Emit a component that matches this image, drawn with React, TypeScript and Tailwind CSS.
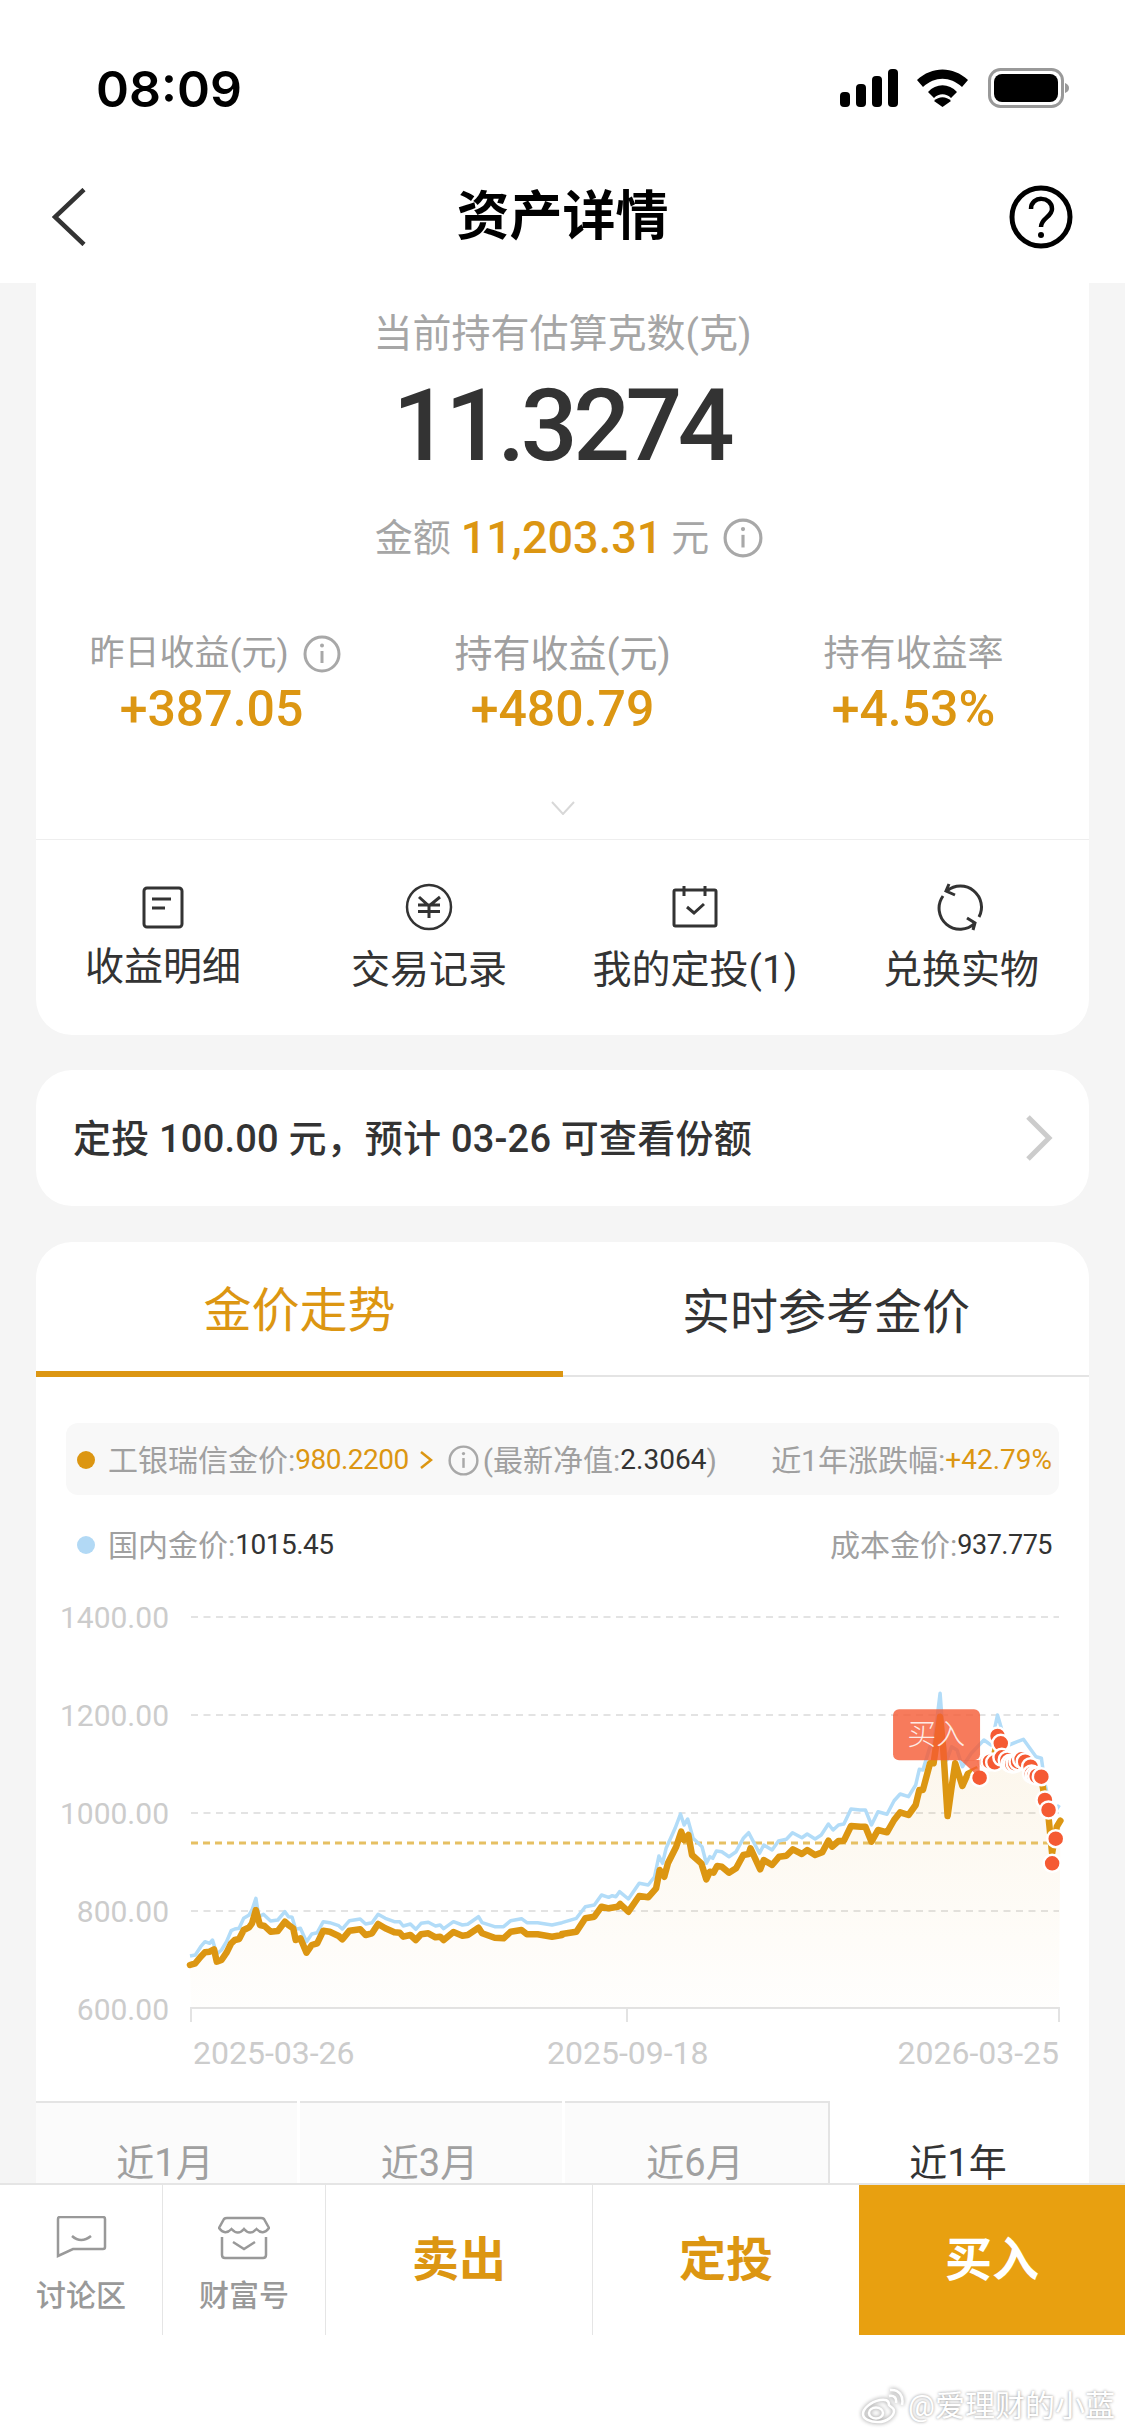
const goldLeft = [530,1155,545,1150,560,1130,572,1117,585,1115,597,1108,605,1145,618,1140,632,1118,645,1090,655,1080,667,1077,680,1050,695,1042,703,1030,714,990,725,1035,738,1038,755,1055,775,1053,795,1025,805,1035,818,1045,825,1080,838,1075,855,1118,870,1095,885,1090,902,1052,920,1055,945,1068,955,1078,975,1052,1005,1048,1020,1065,1038,1060,1055,1032,1075,1045,1100,1057,1115,1058,1125,1070,1145,1065,1160,1080,1175,1063,1195,1060,1215,1072,1228,1070,1238,1080,1265,1056,1290,1067,1305,1065,1335,1043,1345,1060,1380,1073,1405,1075,1425,1055,1455,1050,1470,1063,1500,1063,1540,1070,1568,1065];
const blueLeft = [530,1128,545,1125,560,1100,572,1085,585,1090,593,1080,605,1122,618,1110,632,1085,645,1052,655,1047,667,1045,680,1015,695,1005,703,990,714,955,722,1010,735,1003,755,1023,775,1020,795,995,805,1010,815,1012,825,1048,838,1045,855,1085,870,1062,885,1058,902,1025,920,1028,945,1037,955,1047,975,1022,1005,1017,1020,1032,1038,1028,1055,1003,1075,1015,1100,1025,1115,1025,1125,1038,1145,1032,1160,1048,1175,1030,1195,1027,1215,1038,1228,1035,1238,1046,1265,1025,1290,1035,1305,1033,1335,1010,1345,1028,1380,1040,1405,1040,1425,1022,1455,1016,1470,1028,1500,1028,1540,1035,1568,1028];
const goldRight = [0,852,40,845,65,805,90,800,110,770,130,775,155,770,162,762,185,785,215,738,240,742,262,715,272,660,285,680,295,640,318,590,332,545,340,570,352,555,362,615,388,640,402,688,412,665,422,668,432,648,445,650,465,668,485,655,505,615,520,612,525,595,552,658,562,630,585,645,605,620,625,617,643,598,668,612,683,600,705,615,725,607,742,572,752,590,770,573,785,572,805,528,832,530,845,530,862,575,880,540,905,547,925,510,942,487,965,495,985,465,995,420,1005,420,1025,340,1035,340,1053,200,1062,300,1074,498,1084,420,1095,340,1115,408,1130,372,1163,355,1200,330,1215,265,1225,285,1245,330,1290,335,1335,385,1345,450,1355,500,1365,610,1378,530,1388,512];
const blueRight = [0,818,40,805,65,770,90,765,110,735,130,742,140,737,150,740,160,725,185,747,215,700,240,705,258,680,270,618,280,640,290,595,315,535,330,492,340,525,350,507,365,565,390,590,402,640,412,620,420,625,430,603,445,605,465,620,485,605,505,565,520,548,550,610,562,585,585,600,603,573,625,568,642,548,668,563,683,552,705,567,722,555,742,522,755,540,770,525,785,522,805,477,830,480,845,480,862,525,880,485,905,493,925,452,942,432,965,440,985,405,995,358,1005,360,1025,290,1035,290,1053,130,1062,260,1072,330,1085,290,1100,300,1115,350,1140,310,1175,270,1195,285,1213,195,1225,240,1245,285,1285,268,1320,320,1335,325,1345,400,1365,500,1385,465];
const buyDots = [[1178,335],[1185,335],[1192,335],[1205,337],[1213,258],[1222,280],[1225,322],[1240,330],[1248,340],[1254,342],[1262,340],[1270,335],[1280,328],[1290,335],[1305,350],[1308,372],[1315,376],[1322,378],[1335,380],[1345,450],[1355,480],[1375,566],[1365,640],[1163,383]];

function toPoints(left: number[], right: number[]) {
  const out: string[] = [];
  for (let i = 0; i < left.length; i += 2) out.push(`${(left[i] / 2.79).toFixed(1)},${(1580 + left[i + 1] / 3).toFixed(1)}`);
  for (let i = 0; i < right.length; i += 2) out.push(`${(562 + right[i] / 2.785).toFixed(1)},${(1650 + right[i + 1] / 3).toFixed(1)}`);
  return out.join(' ');
}

function InfoIcon({ size }: { size: string }) {
  return (
    <svg viewBox="0 0 38 38" className={`${size} shrink-0`} fill="none" stroke="#a8a8a8">
      <circle cx="19" cy="19" r="17" strokeWidth="3" />
      <path d="M19 16v12" strokeWidth="3" />
      <circle cx="19" cy="10.5" r="2" fill="#a8a8a8" stroke="none" />
    </svg>
  );
}

function StatusBar() {
  return (
    <div className="flex h-[60px] items-center justify-between pl-[96px] pr-[56px]">
      <span className="pt-[2px] font-['Inter'] text-[50px] font-semibold text-black">08:09</span>
      <svg viewBox="0 0 229 40" className="h-[40px] w-[229px]" fill="black">
        <rect x="0" y="24" width="10" height="15" rx="4" />
        <rect x="16" y="16" width="10" height="23" rx="4" />
        <rect x="32" y="8" width="10" height="31" rx="4" />
        <rect x="48" y="1" width="10" height="38" rx="4" />
        <path d="M77 12C92 -2 113 -2 128 12L122 19C110 8 95 8 83 19Z" />
        <path d="M88 24C96 15 109 15 117 24L111 30C106 25 99 25 94 30Z" />
        <path d="M102.500 39L94 33C99 28 106 28 111 33Z" />
        <rect x="149.500" y="1.500" width="73" height="37" rx="11" fill="none" stroke="#999" strokeWidth="3" />
        <rect x="154" y="6" width="64" height="28" rx="8" />
        <path d="M225 15C228 16 229 18 229 20C229 22 228 24 225 25Z" fill="#999" />
      </svg>
    </div>
  );
}

function NavBar() {
  return (
    <div className="mt-[67px] grid h-[62px] grid-cols-[1fr_auto_1fr] items-center px-[52px]">
      <svg viewBox="0 0 34 58" className="h-[58px] w-[34px]" fill="none" stroke="#333" strokeWidth="4.5">
        <path d="M32 1.500L3 29L32 56.500" />
      </svg>
      <h1 className="text-[53px] font-bold leading-none text-black">资产详情</h1>
      <svg viewBox="0 0 64 64" className="h-[64px] w-[64px] justify-self-end" fill="none" stroke="black">
        <circle cx="32" cy="32" r="29" strokeWidth="5" />
        <path d="M22 24C22 10 43 11 43 24C43 32 32 33 32 42" strokeWidth="4.500" />
        <circle cx="32" cy="50" r="3" fill="black" stroke="none" />
      </svg>
    </div>
  );
}

function Stat({ label, value, info, labelCls }: { label: string; value: string; info?: boolean; labelCls: string }) {
  return (
    <div className="flex flex-col items-center">
      <div className={`${labelCls} flex h-[50px] items-center gap-[14px] text-[#a0a0a0]`}>
        {label}
        {info && <InfoIcon size="h-[38px] w-[38px]" />}
      </div>
      <div className="flex h-[60px] items-center text-[50px] font-medium text-[#dc9612]">{value}</div>
    </div>
  );
}

const actions = [
  {
    label: '收益明细',
    labelCls: 'mt-[11px]',
    icon: (
      <svg viewBox="0 0 48 48" className="h-[48px] w-[48px]" fill="none" stroke="#333" strokeWidth="3">
        <rect x="5" y="5" width="38" height="39" rx="3" />
        <path d="M13 16H32M13 25H26" />
      </svg>
    ),
  },
  {
    label: '交易记录',
    labelCls: 'mt-[14px]',
    icon: (
      <svg viewBox="0 0 48 48" className="h-[48px] w-[48px]" fill="none" stroke="#333" strokeWidth="2.500">
        <circle cx="24" cy="24" r="22" />
        <path d="M14 14L24 23L35 14M13 22H35M13 28.500H35M24 23V35" strokeWidth="3" />
      </svg>
    ),
  },
  {
    label: '我的定投(1)',
    labelCls: 'mt-[14px]',
    icon: (
      <svg viewBox="0 0 48 48" className="h-[48px] w-[48px]" fill="none" stroke="#333" strokeWidth="3">
        <rect x="3" y="7" width="42" height="36" rx="1.500" />
        <path d="M13 3V13M34 3V13M16 24L23 30L33 21" />
      </svg>
    ),
  },
  {
    label: '兑换实物',
    labelCls: 'mt-[14px]',
    icon: (
      <svg viewBox="938 884 48 48" className="h-[48px] w-[48px]" fill="none" stroke="#333" strokeWidth="3">
        <path d="M948 892A21 21 0 0 1 980 918M950 885L947 892L956 896" />
        <path d="M944 897A21 21 0 0 0 976 924M968 919L976 924L974 931" />
      </svg>
    ),
  },
];

function AssetCard() {
  return (
    <section className="mx-[36px] rounded-b-[36px] bg-white">
      <div className="flex h-[100px] items-center justify-center pt-[2px] text-[39px] text-[#a6a6a6]">当前持有估算克数(克)</div>
      <div className="flex h-[84px] items-center justify-center pr-[2px] pt-[2px] text-[100px] font-medium leading-none tracking-[-4.5px] text-[#333]">11.3274</div>
      <div className="mt-[42px] flex h-[58px] items-center justify-center pl-[13px] text-[38px] text-[#a6a6a6]">
        <span>金额</span>
        <span className="ml-[10px] text-[45px] font-medium text-[#dc9612]">11,203.31</span>
        <span className="ml-[9px]">元</span>
        <InfoIcon size="ml-[14px] h-[40px] w-[40px]" />
      </div>
      <div className="mt-[62px] grid grid-cols-3">
        <Stat label="昨日收益(元)" value="+387.05" info labelCls="text-[35px] pl-[7px]" />
        <Stat label="持有收益(元)" value="+480.79" labelCls="text-[38px]" />
        <Stat label="持有收益率" value="+4.53%" labelCls="text-[36px]" />
      </div>
      <div className="flex h-[101px] items-start justify-center border-b-[1px] border-[#eeeeee] pt-[62px]">
        <svg viewBox="0 0 24 14" className="h-[14px] w-[24px]" fill="none" stroke="#d8d8d8" strokeWidth="2">
          <path d="M1 1L12 13L23 1" />
        </svg>
      </div>
      <div className="ml-[-6px] grid h-[195px] w-[1064px] grid-cols-4 pt-[43px]">
        {actions.map((a) => (
          <div key={a.label} className="flex flex-col items-center">
            {a.icon}
            <span className={`${a.labelCls} text-[39px] leading-[50px] text-[#333]`}>{a.label}</span>
          </div>
        ))}
      </div>
    </section>
  );
}

function PlanCard() {
  return (
    <section className="mx-[36px] mt-[35px] flex h-[136px] items-center justify-between rounded-[36px] bg-white pl-[37px] pr-[36px]">
      <span className="pt-[2px] text-[38px] font-medium tracking-[0.2px] text-[#333]">定投 100.00 元，预计 03-26 可查看份额</span>
      <svg viewBox="0 0 28 46" className="h-[46px] w-[28px]" fill="none" stroke="#cccccc" strokeWidth="5">
        <path d="M3 2L24 23L3 44" />
      </svg>
    </section>
  );
}

function TrendChart() {
  const gold = toPoints(goldLeft, goldRight);
  const blue = toPoints(blueLeft, blueRight);
  const grid = [1617, 1715, 1813, 1911];
  const yLabels = ['1400.00', '1200.00', '1000.00', '800.00', '600.00'];
  const dx = (x: number) => 562 + x / 2.785;
  const dy = (y: number) => 1650 + y / 3;

  return (
    <svg viewBox="36 1590 1053 500" className="h-[500px] w-[1053px]" fill="none">
      <defs>
        <linearGradient id="goldFill" gradientUnits="userSpaceOnUse" x1="0" y1="1720" x2="0" y2="2008">
          <stop offset="0" stopColor="#dc9612" stopOpacity="0.09" />
          <stop offset="1" stopColor="#dc9612" stopOpacity="0.01" />
        </linearGradient>
      </defs>
      {grid.map((y) => (
        <line key={y} x1="191" x2="1059" y1={y} y2={y} stroke="#e3e3e3" strokeWidth="2" strokeDasharray="7 5.500" />
      ))}
      <path d="M191 2022V2008H1059V2022M627 2008V2022" stroke="#e3e3e3" strokeWidth="2" />
      {yLabels.map((t, i) => (
        <text key={t} x="169" y={1628 + i * 98} textAnchor="end" fontSize="30" fill="#cccccc">{t}</text>
      ))}
      <text x="193" y="2064" fontSize="32" fill="#cccccc">2025-03-26</text>
      <text x="547" y="2064" fontSize="32" fill="#cccccc">2025-09-18</text>
      <text x="1059" y="2064" textAnchor="end" fontSize="32" fill="#cccccc">2026-03-25</text>
      <polygon points={`${gold} 1059,2008 191,2008`} fill="url(#goldFill)" />
      <line x1="191" x2="1059" y1="1843" y2="1843" stroke="#e6c063" strokeWidth="3" strokeDasharray="7 5" />
      <polyline points={blue} stroke="#b2dcf8" strokeWidth="3.500" strokeLinejoin="round" />
      <polyline points={gold} stroke="#dc9612" strokeWidth="6.500" strokeLinejoin="round" strokeLinecap="round" />
      {buyDots.map(([x, y], i) => (
        <circle key={i} cx={dx(x)} cy={dy(y)} r="8.500" fill="#f55a33" stroke="white" strokeWidth="2.500" />
      ))}
      <path d={`M${dx(1110)} ${dy(330)}H${dx(1163)}V${dy(383)}Z`} fill="#f55a33" fillOpacity="0.8" />
      <rect x={dx(922)} y={dy(178)} width="87" height="51" rx="6" fill="#f55a33" fillOpacity="0.8" />
      <text x={dx(1042)} y="1745" textAnchor="middle" fontSize="29" fontWeight="300" fill="white" fillOpacity="0.85">买入</text>
    </svg>
  );
}

function TrendCard() {
  const ranges = [
    { label: '近1月', cls: 'w-[261px] pr-[3px]' },
    { label: '近3月', cls: 'w-[262px] pr-[3px]' },
    { label: '近6月', cls: 'w-[265px] pr-[3px] border-r-[2px]' },
  ];
  return (
    <section className="mx-[36px] mt-[36px] rounded-t-[36px] bg-white">
      <div className="flex h-[135px] border-b-[2px] border-[#e4e4e4]">
        <div className="mb-[-2px] flex h-[135px] w-[527px] items-center justify-center border-b-[6px] border-[#dc9612] pt-[8px] text-[48px] text-[#dc9612]">金价走势</div>
        <div className="flex flex-1 items-center justify-center pt-[8px] text-[48px] text-[#333]">实时参考金价</div>
      </div>
      <div className="mx-[30px] mt-[46px] flex h-[72px] items-center justify-between rounded-[12px] bg-[#f8f8f8] pl-[11px] pr-[7px] pt-[2px] text-[30px] text-[#a0a0a0]">
        <div className="flex items-center">
          <span className="mr-[13px] h-[18px] w-[18px] rounded-full bg-[#dc9612]" />
          <span>工银瑞信金价:</span>
          <span className="text-[28px] tracking-[-0.5px] text-[#dc9612]">980.2200</span>
          <svg viewBox="0 0 14 20" className="ml-[10px] h-[20px] w-[14px]" fill="none" stroke="#dc9612" strokeWidth="2.500">
            <path d="M2 2L12 10L2 18" />
          </svg>
          <InfoIcon size="ml-[15px] h-[31px] w-[31px]" />
          <span className="ml-[4px]">(最新净值:</span>
          <span className="text-[28px] text-[#333]">2.3064</span>
          <span>)</span>
        </div>
        <div className="flex items-center">
          <span>近1年涨跌幅:</span>
          <span className="text-[28px] text-[#dc9612]">+42.79%</span>
        </div>
      </div>
      <div className="mx-[30px] mt-[25px] flex h-[50px] items-center justify-between pl-[11px] pr-[7px] text-[30px] text-[#a0a0a0]">
        <div className="flex items-center">
          <span className="mr-[13px] h-[18px] w-[18px] rounded-full bg-[#b2d9f5]" />
          <span>国内金价:</span>
          <span className="text-[28px] tracking-[-0.5px] text-[#333]">1015.45</span>
        </div>
        <div className="flex items-center">
          <span>成本金价:</span>
          <span className="text-[27px] tracking-[-0.5px] text-[#333]">937.775</span>
        </div>
      </div>
      <div className="mt-[20px]">
        <TrendChart />
      </div>
      <div className="mt-[11px] flex h-[82px] gap-[3px]">
        {ranges.map((r) => (
          <div key={r.label} className={`${r.cls} flex items-start justify-center border-t-[2px] border-[#e4e4e4] bg-[#fbfbfb] pt-[41px] text-[38px] leading-[38px] text-[#a0a0a0]`}>
            {r.label}
          </div>
        ))}
        <div className="flex flex-1 items-start justify-center pr-[6px] pt-[43px] text-[38px] leading-[38px] text-[#333]">近1年</div>
      </div>
    </section>
  );
}

function BottomBar() {
  return (
    <div className="relative h-[253px] border-t-[2px] border-[#e5e5e5] bg-white">
      <div className="flex h-[150px]">
        <div className="flex w-[163px] flex-col items-center border-r border-[#e5e5e5] pt-[31px]">
          <svg viewBox="0 0 51 42" className="h-[42px] w-[51px]" fill="none" stroke="#999" strokeWidth="2.500">
            <path d="M2 40V3Q2 1 4 1H47Q49 1 49 3V31Q49 33 47 33H17L2 40Z" />
            <path d="M16 20Q25 28 35 20" />
          </svg>
          <span className="mt-[18px] text-[30px] font-medium leading-[40px] text-[#999]">讨论区</span>
        </div>
        <div className="flex w-[163px] flex-col items-center border-r border-[#e5e5e5] pt-[31px]">
          <svg viewBox="0 0 52 44" className="h-[44px] w-[52px]" fill="none" stroke="#999" strokeWidth="2.500">
            <path d="M1 12L6 3Q7 2 9 2H43Q45 2 46 3L51 12Q45 20 38.500 13Q32 20 26 13Q20 20 13.500 13Q7 20 1 12Z" />
            <path d="M4 21V39Q4 42 7 42H45Q48 42 48 39V21M15 26L26 33L37 26" />
          </svg>
          <span className="mt-[16px] text-[30px] font-medium leading-[40px] text-[#999]">财富号</span>
        </div>
        <div className="flex w-[267px] items-center justify-center border-r border-[#e5e5e5] text-[47px] font-bold text-[#dc9612]">卖出</div>
        <div className="flex w-[266px] items-center justify-center text-[47px] font-bold text-[#dc9612]">定投</div>
        <div className="flex flex-1 items-center justify-center bg-[#e8a010] text-[47px] font-bold text-white">买入</div>
      </div>
      <div className="absolute bottom-[8px] right-[10px] flex items-center gap-[3px] text-[30px] text-white [text-shadow:0_0_3px_rgba(0,0,0,0.45)]">
        <svg viewBox="0 0 44 36" className="h-[36px] w-[44px] drop-shadow-[0_0_2px_rgba(0,0,0,0.45)]" fill="none" stroke="white" strokeWidth="2.500">
          <path d="M19 12C9 14 2 21 2 26C2 31 9 34 17 34C26 34 33 28 33 23C33 19 29 19 28 17C28 12 24 11 19 12Z" />
          <ellipse cx="15" cy="25" rx="7" ry="5.500" />
          <path d="M28 8C33 7 36 10 35 15M29 2C38 1 43 8 41 17" />
        </svg>
        <span>@爱理财的小蓝</span>
      </div>
    </div>
  );
}

export default function App() {
  return (
    <div className="flex h-[2436px] w-[1125px] flex-col overflow-hidden bg-[#f5f5f5] font-['Roboto','Noto_Sans_CJK_SC',sans-serif]">
      <header className="h-[283px] shrink-0 bg-white pt-[58px]">
        <StatusBar />
        <NavBar />
      </header>
      <main className="h-[1900px] shrink-0 overflow-hidden">
        <AssetCard />
        <PlanCard />
        <TrendCard />
      </main>
      <BottomBar />
    </div>
  );
}
